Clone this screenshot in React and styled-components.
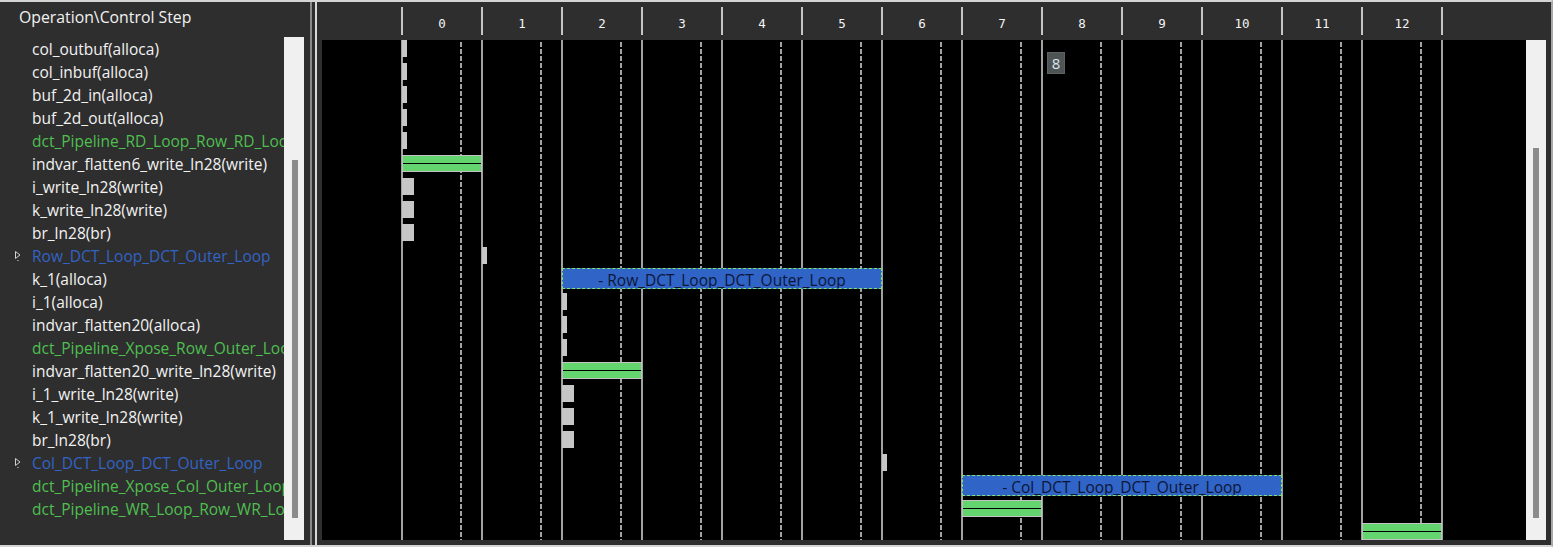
import React from "react";
import styled, { createGlobalStyle } from "styled-components";

const GlobalStyle = createGlobalStyle`
  html, body {
    margin: 0;
    padding: 0;
    background: #2e2e2e;
  }
  * {
    box-sizing: border-box;
  }
`;

const ROW_H = 23;
const CANVAS_X = 322;

const operations = [
  { name: "col_outbuf(alloca)", kind: "op" },
  { name: "col_inbuf(alloca)", kind: "op" },
  { name: "buf_2d_in(alloca)", kind: "op" },
  { name: "buf_2d_out(alloca)", kind: "op" },
  { name: "dct_Pipeline_RD_Loop_Row_RD_Loop", kind: "pipe" },
  { name: "indvar_flatten6_write_ln28(write)", kind: "op" },
  { name: "i_write_ln28(write)", kind: "op" },
  { name: "k_write_ln28(write)", kind: "op" },
  { name: "br_ln28(br)", kind: "op" },
  { name: "Row_DCT_Loop_DCT_Outer_Loop", kind: "loop" },
  { name: "k_1(alloca)", kind: "op" },
  { name: "i_1(alloca)", kind: "op" },
  { name: "indvar_flatten20(alloca)", kind: "op" },
  { name: "dct_Pipeline_Xpose_Row_Outer_Loop", kind: "pipe" },
  { name: "indvar_flatten20_write_ln28(write)", kind: "op" },
  { name: "i_1_write_ln28(write)", kind: "op" },
  { name: "k_1_write_ln28(write)", kind: "op" },
  { name: "br_ln28(br)", kind: "op" },
  { name: "Col_DCT_Loop_DCT_Outer_Loop", kind: "loop" },
  { name: "dct_Pipeline_Xpose_Col_Outer_Loop", kind: "pipe" },
  { name: "dct_Pipeline_WR_Loop_Row_WR_Loop", kind: "pipe" },
];

const steps = Array.from({ length: 13 }, (_, i) => i);

const bars = [
  ...[0, 1, 2, 3, 4].map((row) => ({ kind: "tick", row, x: 402, w: 5 })),
  { kind: "green", row: 5, x: 402, w: 80 },
  ...[6, 7, 8].map((row) => ({ kind: "short", row, x: 402, w: 12 })),
  { kind: "tick", row: 9, x: 482, w: 5 },
  { kind: "loop", row: 10, x: 562, w: 320, label: "- Row_DCT_Loop_DCT_Outer_Loop" },
  ...[11, 12, 13].map((row) => ({ kind: "tick", row, x: 562, w: 5 })),
  { kind: "green", row: 14, x: 562, w: 80 },
  ...[15, 16, 17].map((row) => ({ kind: "short", row, x: 562, w: 12 })),
  { kind: "tick", row: 18, x: 882, w: 5 },
  { kind: "loop", row: 19, x: 962, w: 320, label: "- Col_DCT_Loop_DCT_Outer_Loop" },
  { kind: "green", row: 20, x: 962, w: 80 },
  { kind: "green", row: 21, x: 1362, w: 80 },
];

const Frame = styled.div`
  display: flex;
  width: 1553px;
  height: 547px;
  background: #2e2e2e;
  border-top: 2px solid #d4d4d4;
  border-bottom: 2px solid #d4d4d4;
  border-right: 2px solid #a8a8a8;
  overflow: hidden;
`;

const LeftPanel = styled.div`
  display: flex;
  flex-direction: column;
  width: 312px;
  flex-shrink: 0;
  border-right: 2px solid #8a8a8a;
  font-family: "Open Sans", "Noto Sans", sans-serif;
`;

const PanelTitle = styled.div`
  height: 35px;
  padding: 4px 0 0 19px;
  font-size: 15.8px;
  line-height: 22px;
  color: #f2f2f2;
`;

const ListBody = styled.div`
  display: flex;
  height: 503px;
  padding-right: 6px;
`;

const OpList = styled.div`
  flex: 1;
  overflow: hidden;
`;

const OpRow = styled.div`
  display: flex;
  align-items: center;
  height: ${ROW_H}px;
  white-space: nowrap;
  font-size: 15.5px;
  color: ${(p) =>
    p.$kind === "pipe" ? "#4fbf50" : p.$kind === "loop" ? "#3363c4" : "#f2f2f2"};
`;

const ExpandSlot = styled.span`
  display: flex;
  align-items: center;
  width: 32px;
  flex-shrink: 0;
  padding-left: 14px;
`;

const ScrollTrack = styled.div`
  width: 20px;
  flex-shrink: 0;
  background: #f0f0f0;
  padding-top: ${(p) => p.$offset}px;
`;

const ScrollThumb = styled.div`
  width: 6px;
  margin-left: ${(p) => p.$inset}px;
  height: ${(p) => p.$length}px;
  background: #8b8b8b;
`;

const Splitter = styled.div`
  width: 5px;
  flex-shrink: 0;
  border-right: 2px solid #d8d8d8;
`;

const RightPanel = styled.div`
  display: flex;
  flex-direction: column;
  flex: 1;
  min-width: 0;
`;

const StepHeader = styled.div`
  display: flex;
  height: 38px;
  padding: 5px 0 3px 84px;
`;

const StepCell = styled.div`
  display: flex;
  align-items: center;
  justify-content: center;
  width: ${(p) => (p.$last ? 82 : 80)}px;
  height: 28px;
  padding-top: 4px;
  border-left: 2px solid #c4c4c4;
  border-right: ${(p) => (p.$last ? "2px solid #c4c4c4" : "none")};
  font-family: "DejaVu Sans Mono", "Liberation Mono", monospace;
  font-size: 12.5px;
  color: #f4f4f4;
`;

const ChartRow = styled.div`
  display: flex;
  height: 500px;
  padding: 0 5px;
`;

const Canvas = styled.div`
  position: relative;
  display: flex;
  width: 1204px;
  flex-shrink: 0;
  background: #000;
  overflow: hidden;
`;

const LeadSpace = styled.div`
  width: 79px;
  flex-shrink: 0;
`;

const GridColumn = styled.div`
  width: ${(p) => (p.$last ? 82 : 80)}px;
  flex-shrink: 0;
  border-left: 2px solid #a2a2a2;
  border-right: ${(p) => (p.$last ? "2px solid #a2a2a2" : "none")};
  padding: 2px 0 0 57px;
`;

const DashLine = styled.div`
  width: 2px;
  height: 100%;
  background: repeating-linear-gradient(
    to bottom,
    #a2a2a2 0 5px,
    transparent 5px 7px
  );
`;

const Bar = styled.div`
  position: absolute;
  height: ${(p) => (p.$kind === "loop" ? 21 : 17)}px;
  ${(p) => (p.$kind === "tick" || p.$kind === "short") && "background: #c6c6c6;"}
  ${(p) =>
    p.$kind === "green" &&
    `
    border: 1px solid #c2c2c2;
    background: linear-gradient(#64d46e 0 7px, #000 7px 8px, #64d46e 8px);
  `}
  ${(p) =>
    p.$kind === "loop" &&
    `
    border: 1px dashed #86e26a;
    background: #3064c6;
    overflow: hidden;
    text-align: center;
    font-family: "Open Sans", "Noto Sans", sans-serif;
    font-size: 15.5px;
    line-height: 23px;
    color: #0c1638;
    white-space: nowrap;
  `}
`;

const LoopLabel = styled.div`
  height: 19px;
  overflow: hidden;
`;

const StepBadge = styled.div`
  position: absolute;
  left: 725px;
  top: 12px;
  width: 18px;
  height: 22px;
  display: flex;
  align-items: center;
  justify-content: center;
  background: #4e5354;
  border: 1px solid #5c6263;
  font-family: "Open Sans", "Noto Sans", sans-serif;
  font-size: 15px;
  color: #dbe6f2;
`;

const BottomStrip = styled.div`
  height: 5px;
`;

function ExpandIcon() {
  return (
    <svg width="8" height="12" viewBox="0 0 8 12">
      <path d="M1.5 1.5 L6 5 L1.5 8.5 Z" fill="none" stroke="#cfcfcf" strokeWidth="1" />
      <rect x="3" y="10" width="2" height="1" fill="#8a8a8a" />
    </svg>
  );
}

function App() {
  return (
    <>
      <GlobalStyle />
      <Frame>
        <LeftPanel>
          <PanelTitle>{"Operation\\Control Step"}</PanelTitle>
          <ListBody>
            <OpList>
              {operations.map((op, i) => (
                <OpRow key={i} $kind={op.kind}>
                  <ExpandSlot>{op.kind === "loop" && <ExpandIcon />}</ExpandSlot>
                  {op.name}
                </OpRow>
              ))}
            </OpList>
            <ScrollTrack $offset={123}>
              <ScrollThumb $inset={8} $length={358} />
            </ScrollTrack>
          </ListBody>
        </LeftPanel>
        <Splitter />
        <RightPanel>
          <StepHeader>
            {steps.map((s) => (
              <StepCell key={s} $last={s === 12}>
                {s}
              </StepCell>
            ))}
          </StepHeader>
          <ChartRow>
            <Canvas>
              <LeadSpace />
              {steps.map((s) => (
                <GridColumn key={s} $last={s === 12}>
                  <DashLine />
                </GridColumn>
              ))}
              {bars.map((b, i) => (
                <Bar
                  key={i}
                  $kind={b.kind}
                  style={{
                    left: b.x - CANVAS_X,
                    top: b.row * ROW_H - (b.kind === "loop" ? 2 : 0),
                    width: b.w,
                  }}
                >
                  {b.label && <LoopLabel>{b.label}</LoopLabel>}
                </Bar>
              ))}
              <StepBadge>8</StepBadge>
            </Canvas>
            <ScrollTrack $offset={108}>
              <ScrollThumb $inset={7} $length={370} />
            </ScrollTrack>
          </ChartRow>
          <BottomStrip />
        </RightPanel>
      </Frame>
    </>
  );
}

export default App;
